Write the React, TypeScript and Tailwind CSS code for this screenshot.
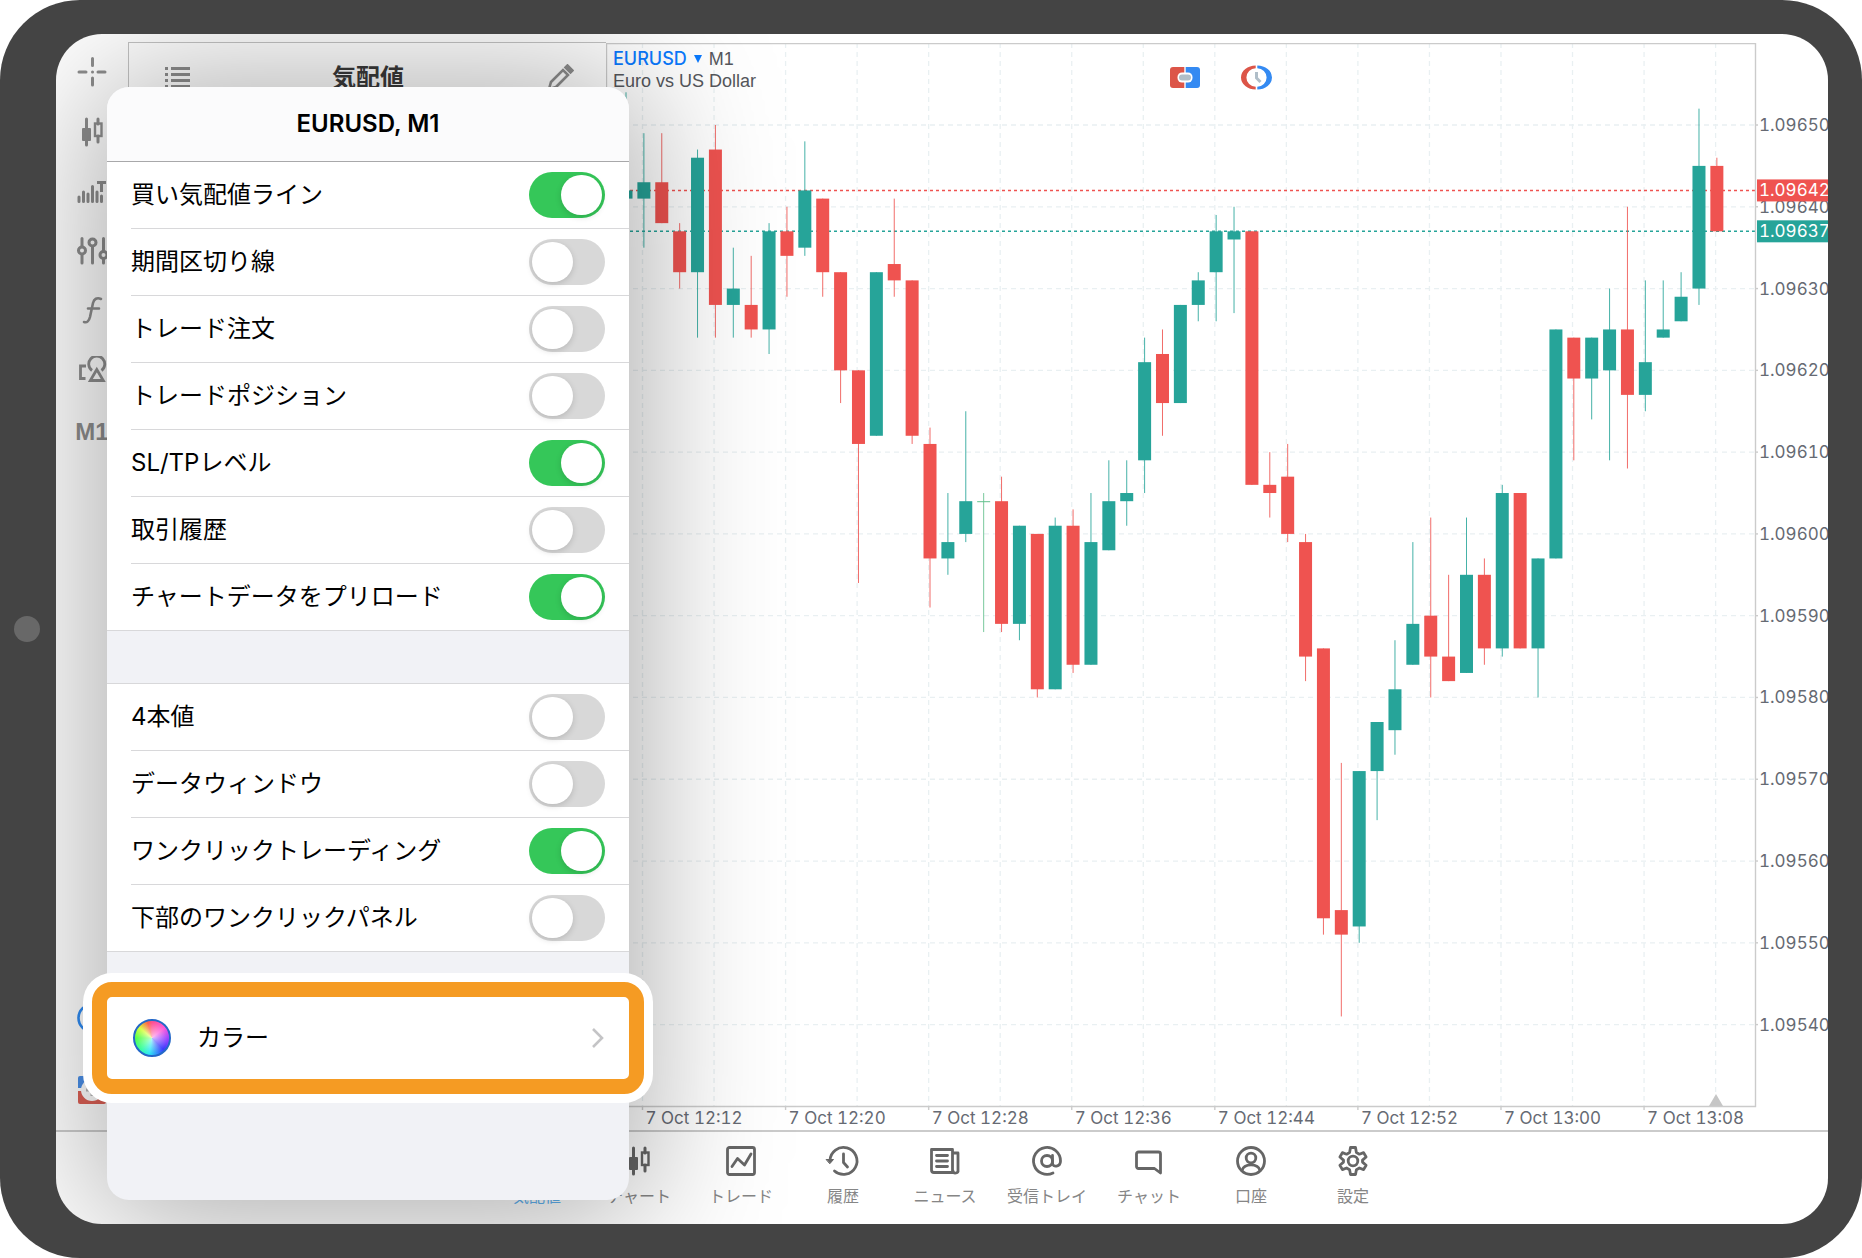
import React from "react";

type Candle = [number, number, number, number, "g" | "r" | "d"];

/* high, body top, body bottom, low (last three digits of the price), colour */
const candles: Candle[] = [
  [654, 642, 641, 640, "g"],
  [649, 643, 641, 635, "g"],
  [649, 643, 638, 638, "r"],
  [638, 637, 632, 630, "r"],
  [647, 646, 632, 624, "g"],
  [650, 647, 628, 624, "r"],
  [635, 630, 628, 624, "g"],
  [634, 628, 625, 624, "r"],
  [638, 637, 625, 622, "g"],
  [640, 637, 634, 629, "r"],
  [648, 642, 635, 634, "g"],
  [641, 641, 632, 629, "r"],
  [632, 632, 620, 616, "r"],
  [620, 620, 611, 594, "r"],
  [632, 632, 612, 612, "g"],
  [641, 633, 631, 629, "r"],
  [631, 631, 612, 611, "r"],
  [613, 611, 597, 591, "r"],
  [605, 599, 597, 595, "g"],
  [615, 604, 600, 599, "g"],
  [605, 604, 604, 588, "d"],
  [607, 604, 589, 588, "r"],
  [601, 601, 589, 587, "g"],
  [600, 600, 581, 580, "r"],
  [602, 601, 581, 581, "g"],
  [603, 601, 584, 583, "r"],
  [605, 599, 584, 584, "g"],
  [609, 604, 598, 598, "g"],
  [609, 605, 604, 601, "g"],
  [624, 621, 609, 605, "g"],
  [625, 622, 616, 612, "r"],
  [628, 628, 616, 616, "g"],
  [632, 631, 628, 626, "g"],
  [639, 637, 632, 626, "g"],
  [640, 637, 636, 627, "g"],
  [637, 637, 606, 606, "r"],
  [610, 606, 605, 602, "r"],
  [611, 607, 600, 599, "r"],
  [600, 599, 585, 582, "r"],
  [586, 586, 553, 551, "r"],
  [572, 554, 551, 541, "r"],
  [571, 571, 552, 550, "g"],
  [577, 577, 571, 565, "g"],
  [587, 581, 576, 573, "g"],
  [599, 589, 584, 584, "g"],
  [602, 590, 585, 580, "r"],
  [595, 585, 582, 582, "r"],
  [602, 595, 583, 583, "g"],
  [597, 595, 586, 584, "r"],
  [606, 605, 586, 585, "g"],
  [605, 605, 586, 586, "r"],
  [597, 597, 586, 580, "g"],
  [625, 625, 597, 597, "g"],
  [624, 624, 619, 609, "r"],
  [624, 624, 619, 614, "g"],
  [630, 625, 620, 609, "g"],
  [640, 625, 617, 608, "r"],
  [631, 621, 617, 615, "g"],
  [631, 625, 624, 624, "g"],
  [632, 629, 626, 626, "g"],
  [652, 645, 630, 628, "g"],
  [646, 645, 637, 637, "r"],
];

const GREEN = "#26a499";
const RED = "#ef5350";
const tone = { g: GREEN, r: RED, d: "#62c08c" };

const PLOT_W = 1149;
const PLOT_H = 1063;
const priceY = (p: number) => 82 + ((650 - p) * 899.6) / 110;
const candleX = (i: number) => 20 + i * 17.883;
const tickX = (i: number) => 36.5 + i * 71.54;

const prices = [650, 640, 630, 620, 610, 600, 590, 580, 570, 560, 550, 540];
const times = ["12:12", "12:20", "12:28", "12:36", "12:44", "12:52", "13:00", "13:08"];

function PriceChart() {
  return (
    <svg viewBox="0 0 1222 1087" className="block h-full w-full tabular-nums" role="img" aria-label="EURUSD M1">
      <g stroke="#e9f0f2" strokeWidth="1.3" strokeDasharray="5 4">
        {prices.map((p) => (
          <line key={p} x1="0" x2={PLOT_W} y1={priceY(p)} y2={priceY(p)} />
        ))}
        {Array.from({ length: 16 }, (_, i) => (
          <line key={i} x1={tickX(i)} x2={tickX(i)} y1="0" y2={PLOT_H} />
        ))}
      </g>
      <path d="M1103 1063 l7 -12 l7 12 Z" fill="#c6c6c6" />
      <line x1="0" x2={PLOT_W} y1={priceY(642)} y2={priceY(642)} stroke={RED} strokeWidth="1.6" strokeDasharray="3 3" />
      <line x1="0" x2={PLOT_W} y1={priceY(637)} y2={priceY(637)} stroke={GREEN} strokeWidth="1.6" strokeDasharray="3 3" />
      {candles.map(([high, top, bottom, low, kind], i) => {
        const x = candleX(i);
        return (
          <g key={i} fill={tone[kind]}>
            <rect x={x - 0.5} y={priceY(high)} width="1" height={priceY(low) - priceY(high)} opacity="0.85" />
            <rect
              x={x - 6.5}
              y={priceY(top)}
              width="13"
              height={Math.max(1, priceY(bottom) - priceY(top))}
            />
          </g>
        );
      })}
      <path d={`M0.5 1063.5 V0.5 H${PLOT_W + 0.5} V1063.5 Z`} fill="none" stroke="#cbcbcb" strokeWidth="1.4" />
      <g stroke="#cbcbcb" strokeWidth="1.4">
        {prices.map((p) => (
          <line key={p} x1={PLOT_W} x2={PLOT_W + 3} y1={priceY(p)} y2={priceY(p)} />
        ))}
        {times.map((t, i) => (
          <line key={t} x1={tickX(i * 2)} x2={tickX(i * 2)} y1={PLOT_H} y2={PLOT_H + 4} />
        ))}
      </g>
      <g fontFamily="Inter, sans-serif" fontSize="17" fill="#666a73">
        {prices.map((p) => (
          <text key={p} x="1153" y={priceY(p) + 6}>{`1.09${p}`}</text>
        ))}
        {times.map((t, i) => (
          <text key={t} x={tickX(i * 2) + 3} y="1081">{`7 Oct ${t}`}</text>
        ))}
        <rect x="1151" y={priceY(642) - 11} width="71" height="22" fill={RED} />
        <rect x="1151" y={priceY(637) - 11} width="71" height="22" fill={GREEN} />
        <text x="1153" y={priceY(642) + 6} fill="#fff">1.09642</text>
        <text x="1153" y={priceY(637) + 6} fill="#fff">1.09637</text>
      </g>
    </svg>
  );
}

function CandlesIcon() {
  return (
    <svg width="32" height="32" viewBox="0 0 32 32" fill="none" stroke="currentColor">
      <path d="M10.5 3v26M22 3v5M22 20v6" strokeWidth="3" strokeLinecap="round" />
      <rect x="6" y="12" width="9" height="13" rx="1" fill="currentColor" stroke="none" />
      <rect x="19" y="7.5" width="6.5" height="12.5" strokeWidth="2.4" />
    </svg>
  );
}

const tools: { name: string; icon: React.ReactNode }[] = [
  {
    name: "十字線",
    icon: (
      <svg width="32" height="32" viewBox="0 0 32 32" stroke="currentColor" strokeWidth="3" strokeLinecap="round">
        <path d="M3 16h7M22 16h7M16.5 2.500v7M16.500 22v7M16.500 16h.01" />
      </svg>
    ),
  },
  { name: "チャートタイプ", icon: <CandlesIcon /> },
  {
    name: "出来高",
    icon: (
      <svg width="32" height="32" viewBox="0 0 32 32" stroke="currentColor" strokeWidth="3">
        <path strokeLinecap="round" d="M3 21v4.500M7.500 16v9.500M12 18v7.500M16.500 10.500v15M21 16v9.500M25.500 20v5.500" />
        <path d="M21 6.500h9M25.500 6v10" />
      </svg>
    ),
  },
  {
    name: "ボリューム設定",
    icon: (
      <svg width="32" height="32" viewBox="0 0 32 32" fill="none" stroke="currentColor" strokeWidth="3" strokeLinecap="round">
        <path d="M6 2.500v8M6 19v8M16.500 11v16M27.500 2.500v12M27.500 23v4" />
        <circle cx="6" cy="14.500" r="3.500" />
        <circle cx="16.500" cy="6.500" r="3.500" />
        <circle cx="27.500" cy="19" r="3.500" />
      </svg>
    ),
  },
  {
    name: "インディケータ",
    icon: (
      <svg width="32" height="32" viewBox="0 0 32 32" fill="none" stroke="currentColor" strokeWidth="2.600" strokeLinecap="round">
        <path d="M25 3c-4-2-7 0-8 4l-3 14c-1 4-3 6-6 5M12 12.500h11" />
      </svg>
    ),
  },
  {
    name: "オブジェクト",
    icon: (
      <svg width="32" height="32" viewBox="0 0 32 32" fill="none" stroke="currentColor" strokeWidth="2.800">
        <path d="M10 10H4.500v12.500h5" />
        <path d="M16 14.500a8 8 0 1 1 9.500 0" />
        <path d="M20.800 13.500l-6.500 11h13z" />
      </svg>
    ),
  },
];

const ICON = {
  width: 36,
  height: 36,
  viewBox: "0 0 36 36",
  fill: "none",
  stroke: "currentColor",
  strokeWidth: 2.8,
  strokeLinecap: "round" as const,
  strokeLinejoin: "round" as const,
};

const tabs: { label: string; icon: React.ReactNode; active?: boolean }[] = [
  {
    label: "気配値",
    active: true,
    icon: (
      <svg {...ICON}>
        <path d="M10 30V8l-5 5M26 6v22l5-5" />
      </svg>
    ),
  },
  { label: "チャート", icon: <CandlesIcon /> },
  {
    label: "トレード",
    icon: (
      <svg {...ICON}>
        <rect x="4.500" y="4.500" width="27" height="27" rx="2" />
        <path d="M9 23.500l5.500-8 7 6.500 6.500-11" />
      </svg>
    ),
  },
  {
    label: "履歴",
    icon: (
      <svg {...ICON}>
        <path d="M5 17.500A13.500 13.500 0 1 1 9.500 28" />
        <path d="M18.500 11v8.500l4 4.500" />
        <path d="M1.500 16.500h7L5 20.500z" fill="currentColor" strokeWidth="1" />
      </svg>
    ),
  },
  {
    label: "ニュース",
    icon: (
      <svg {...ICON}>
        <path d="M25.500 29.500H7a2.500 2.500 0 0 1-2.500-2.500V6.500h21zM25.500 10h5.500v17a2.500 2.500 0 0 1-5 1" />
        <path d="M9.500 12.500h11M9.500 18h11M9.500 23.500h11" />
      </svg>
    ),
  },
  {
    label: "受信トレイ",
    icon: (
      <svg {...ICON}>
        <circle cx="18" cy="18" r="5.500" />
        <path d="M23.500 12.500v7.500c0 5 8 4 8-2A13.500 13.500 0 1 0 24 30" />
      </svg>
    ),
  },
  {
    label: "チャット",
    icon: (
      <svg {...ICON}>
        <path d="M7.500 9h20a2 2 0 0 1 2 2v19l-6-4.500h-16a2 2 0 0 1-2-2V11a2 2 0 0 1 2-2z" />
      </svg>
    ),
  },
  {
    label: "口座",
    icon: (
      <svg {...ICON}>
        <circle cx="18" cy="18" r="13.500" />
        <circle cx="18" cy="15" r="4.800" />
        <path d="M9 27.500c2-7.500 16-7.500 18 0" />
      </svg>
    ),
  },
  {
    label: "設定",
    icon: (
      <svg {...ICON}>
        <circle cx="18" cy="18" r="4.800" />
        <path d="M15.500 4.500h5l.9 5 3 1.700 4.200-1.600 2.500 4.400-3.600 3.100v2l3.600 3.100-2.500 4.400-4.200-1.600-3 1.700-.9 4.800h-5l-.9-4.800-3-1.700-4.200 1.600-2.500-4.400 3.600-3.100v-2l-3.600-3.100 2.500-4.400 4.200 1.600 3-1.700z" />
      </svg>
    ),
  },
];

function SettingRow({ label, on }: { label: string; on: boolean }) {
  return (
    <label className="ml-6 flex h-[67px] items-center justify-between border-b border-[#d8d8da] pr-6 text-2xl text-black last:ml-0 last:pl-6">
      <span>{label}</span>
      <input
        type="checkbox"
        role="switch"
        defaultChecked={on}
        className="h-[46px] w-[76px] shrink-0 appearance-none rounded-full bg-[#d8d8d8] p-[3px] before:block before:h-10 before:w-[41px] before:rounded-full before:bg-white before:shadow-[0_2px_6px_rgba(0,0,0,0.15)] before:content-[''] checked:bg-[#35c759] checked:before:ml-[29px]"
      />
    </label>
  );
}

const chartSettings: [string, boolean][] = [
  ["買い気配値ライン", true],
  ["期間区切り線", false],
  ["トレード注文", false],
  ["トレードポジション", false],
  ["SL/TPレベル", true],
  ["取引履歴", false],
  ["チャートデータをプリロード", true],
];

const panelSettings: [string, boolean][] = [
  ["4本値", false],
  ["データウィンドウ", false],
  ["ワンクリックトレーディング", true],
  ["下部のワンクリックパネル", false],
];

function SettingsPopover() {
  return (
    <section
      role="dialog"
      aria-labelledby="popover-title"
      className="absolute top-[53px] bottom-6 left-[51px] w-[522px] rounded-[22px] bg-[#f1f2f6] shadow-[0_6px_140px_12px_rgba(0,0,0,0.34)]"
    >
      <header className="flex h-[75px] items-center justify-center rounded-t-[22px] border-b border-[#a8a8aa] bg-[#fbfbfc]">
        <h1 id="popover-title" className="text-2xl font-semibold text-black">EURUSD, M1</h1>
      </header>
      <div className="bg-white">
        {chartSettings.map(([label, on]) => (
          <SettingRow key={label} label={label} on={on} />
        ))}
      </div>
      <div className="h-[53px] border-b border-[#d8d8da]" />
      <div className="bg-white">
        {panelSettings.map(([label, on]) => (
          <SettingRow key={label} label={label} on={on} />
        ))}
      </div>
      <div className="h-[45px]" />
      <div className="relative h-[82px]">
        <div className="absolute -inset-[15px] rounded-[20px] border-[15px] border-[#f59b23] bg-white shadow-[0_0_0_9px_#fff]" />
        <button type="button" className="relative flex h-full w-full items-center pr-6 pl-[26px] text-left text-2xl text-black">
          <span className="h-[38px] w-[38px] shrink-0 rounded-full border-2 border-[#2468c8] bg-[radial-gradient(circle,rgba(255,255,255,0.65),rgba(255,255,255,0)_65%),conic-gradient(#ff5090,#ff5ad8_50deg,#a045ff_90deg,#3a3cff_135deg,#30e8f5_190deg,#3cffa0_225deg,#58ff4c_270deg,#d8ff40_310deg,#ff6048_345deg,#ff5090)]" />
          <span className="ml-[26px] flex-1">カラー</span>
          <svg width="14" height="22" viewBox="0 0 14 22" fill="none" stroke="#c4c4c6" strokeWidth="2.600">
            <path d="M2 2l9 9-9 9" />
          </svg>
        </button>
      </div>
    </section>
  );
}

export default function App() {
  return (
    <div className="flex min-h-screen rounded-[80px] bg-[#444] py-[34px] pr-[34px] font-['Inter','Noto_Sans_CJK_JP',sans-serif]">
      <div className="flex w-14 shrink-0 items-center pl-3.5">
        <span className="h-[26px] w-[26px] rounded-full bg-[#686868]" />
      </div>
      <main className="relative flex min-w-0 flex-1 flex-col overflow-hidden rounded-[46px] bg-white">
        <div className="flex min-h-0 flex-1">
          <nav className="flex w-[72px] shrink-0 flex-col justify-between pt-2 pb-1">
            <div className="flex flex-col">
              {tools.map((t) => (
                <button key={t.name} type="button" aria-label={t.name} className="flex h-[60px] items-center justify-center text-[#8e8e8e]">
                  {t.icon}
                </button>
              ))}
              <button type="button" className="flex h-[60px] items-center justify-center font-['Liberation_Sans',sans-serif] text-2xl font-bold text-[#8e8e8e]">
                M1
              </button>
            </div>
            <div className="flex flex-col">
              <button type="button" aria-label="時計" className="flex h-[72px] items-center justify-center">
                <svg width="32" height="32" viewBox="0 0 32 32" fill="none" stroke="#2f8bf2" strokeWidth="2.600">
                  <circle cx="16" cy="16" r="13.500" />
                  <path d="M16 8v8H7" />
                </svg>
              </button>
              <button type="button" aria-label="新規注文" className="flex h-[72px] items-center justify-center">
                <svg width="28" height="28" viewBox="0 0 28 28">
                  <path d="M2 0h24a2 2 0 0 1 2 2v10H0V2a2 2 0 0 1 2-2z" fill="#4a8fe8" />
                  <path d="M0 15h28v11a2 2 0 0 1-2 2H2a2 2 0 0 1-2-2z" fill="#dc6055" />
                  <circle cx="14" cy="14" r="11" fill="#fff" />
                  <path d="M14 8v12M8 14h12" stroke="#b8b8b8" strokeWidth="3" />
                </svg>
              </button>
            </div>
          </nav>

          <aside className="mt-2 flex w-[478px] shrink-0 flex-col border-t border-l border-[#c4c4c4]">
            <header className="flex h-[70px] items-center justify-between pr-8 pl-9">
              <button type="button" aria-label="リスト" className="text-[#8e8e8e]">
                <svg width="25" height="22" viewBox="0 0 25 22" stroke="currentColor" strokeWidth="3">
                  <path d="M0 1.500h3M6 1.500h19M0 7.500h3M6 7.500h19M0 13.500h3M6 13.500h19M0 19.500h3M6 19.500h19" />
                </svg>
              </button>
              <h2 className="text-2xl font-bold text-[#3a3a3a]">気配値</h2>
              <button type="button" aria-label="編集" className="text-[#8e8e8e]">
                <svg width="28" height="28" viewBox="0 0 28 28" fill="none" stroke="currentColor" strokeWidth="2.600">
                  <path d="M3 25l2-7L17 6l5 5L10 23z" />
                  <path d="M19.500 3.500l2-2 5 5-2 2z" fill="currentColor" />
                </svg>
              </button>
            </header>
          </aside>

          <section className="relative mt-[9px] min-w-0 flex-1">
            <PriceChart />
            <div className="absolute top-[5px] left-[7px] font-['Liberation_Sans',sans-serif] text-lg leading-[22px] text-[#55575c]">
              <p className="flex items-center">
                <button type="button" className="flex items-center font-['Inter',sans-serif] font-medium text-[#0a7aff]">
                  EURUSD
                  <svg width="8" height="8" viewBox="0 0 8 8" className="mx-[7px]">
                    <path d="M0 0h8L4 8z" fill="currentColor" />
                  </svg>
                </button>
                M1
              </p>
              <p>Euro vs US Dollar</p>
            </div>
            <div className="absolute top-5 left-[564px] flex gap-[41px]">
              <button type="button" aria-label="ワンクリック取引">
                <svg width="30" height="30" viewBox="0 0 30 30">
                  <path d="M3 4h11.300v21H3a3 3 0 0 1-3-3V7a3 3 0 0 1 3-3z" fill="#dc5548" />
                  <path d="M15.700 4H27a3 3 0 0 1 3 3v15a3 3 0 0 1-3 3H15.700z" fill="#348af2" />
                  <rect x="7.500" y="9.500" width="15" height="10" rx="4.500" fill="#fff" />
                  <rect x="9" y="11.500" width="12" height="6" rx="3" fill="#b0bec8" />
                </svg>
              </button>
              <button type="button" aria-label="ペンディング注文">
                <svg width="31" height="30" viewBox="0 0 31 30">
                  <path d="M14.700 2.500A14.700 12 0 0 0 14.700 26.500V23.800A9.300 9.300 0 0 1 14.700 5.200Z" fill="#dc5548" />
                  <path d="M16.300 2.500A14.700 12 0 0 1 16.300 26.500V23.800A9.300 9.300 0 0 0 16.300 5.200Z" fill="#348af2" />
                  <path d="M15.500 9v6l4 4" fill="none" stroke="#b0bec8" strokeWidth="3" />
                </svg>
              </button>
            </div>
          </section>
        </div>

        <nav className="flex h-[94px] shrink-0 justify-center border-t-2 border-[#cbcbcb] pt-[11px] pl-1.5">
          {tabs.map((t) => (
            <button
              key={t.label}
              type="button"
              className={
                t.active
                  ? "flex w-[102px] flex-col items-center text-base text-[#62b2f0]"
                  : "flex w-[102px] flex-col items-center text-base text-[#666]"
              }
            >
              <span className="flex h-9 items-center">{t.icon}</span>
              <span className={t.active ? "mt-[5px] leading-6" : "mt-[5px] leading-6 text-[#868686]"}>{t.label}</span>
            </button>
          ))}
        </nav>

        <SettingsPopover />
      </main>
    </div>
  );
}
